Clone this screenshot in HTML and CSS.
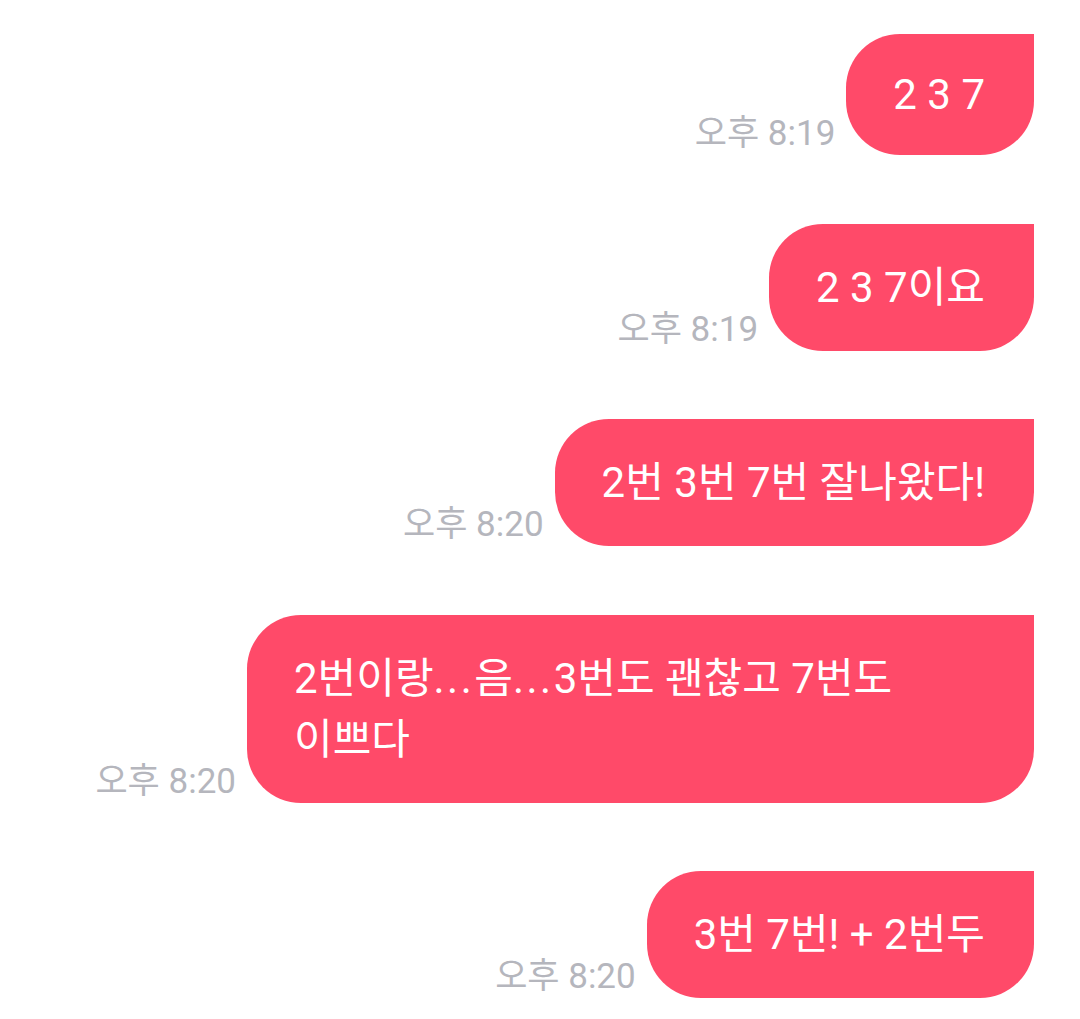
FILE: index.html
```html
<!DOCTYPE html>
<html>
<head>
<meta charset="UTF-8">
<title>chat</title>
<link rel="stylesheet" href="styles.css">
</head>
<body>
	<div class="chat">
		<div class="row">
			<span class="time">오후 8:19</span>
			<div class="bubble latin">2 3 7</div>
		</div>
		<div class="row">
			<span class="time">오후 8:19</span>
			<div class="bubble">2 3 7이요</div>
		</div>
		<div class="row">
			<span class="time">오후 8:20</span>
			<div class="bubble">2번 3번 7번 잘나왔다!</div>
		</div>
		<div class="row">
			<span class="time">오후 8:20</span>
			<div class="bubble">2번이랑<span class="dots">...</span>음<span class="dots">...</span>3번도 괜찮고 7번도 이쁘다</div>
		</div>
		<div class="row">
			<span class="time">오후 8:20</span>
			<div class="bubble">3번 7번! + 2번두</div>
		</div>
	</div>
</body>
</html>
```

FILE: styles.css
```css
body {
	margin: 0;
	background-color: #ffffff;
	font-family: Roboto, "Noto Sans CJK KR", sans-serif;
}

.chat {
	display: flex;
	flex-direction: column;
	gap: 68.5px;
	padding: 34px 46px 0 0;
}

.row {
	display: flex;
	justify-content: flex-end;
	align-items: flex-end;
	gap: 11px;
}

.time {
	font-size: 35px;
	line-height: 35px;
	color: #b5b6bd;
	margin-bottom: 4px;
	white-space: nowrap;
}

.bubble {
	max-width: 787px;
	box-sizing: border-box;
	padding: 33px 49px 33px 47px;
	background-color: #ff4a69;
	color: #ffffff;
	font-size: 42px;
	line-height: 61px;
	word-break: keep-all;
	border-radius: 54px 0 54px 54px;
}

.latin {
	padding-top: 30px;
	padding-bottom: 30px;
}

.dots {
	letter-spacing: 2.5px;
}
```
